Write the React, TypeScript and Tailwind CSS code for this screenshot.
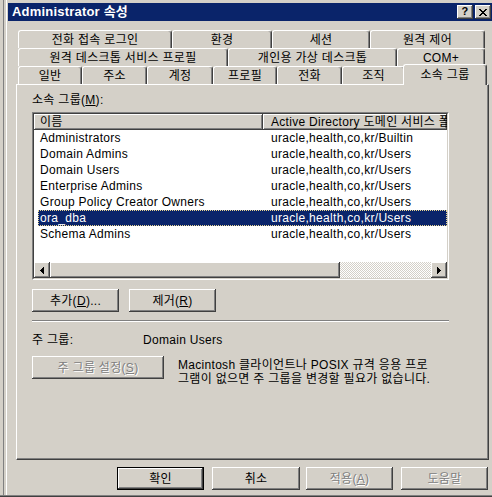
import React from "react";

// classic win2k bevels
const raised =
  "bg-[#d4d0c8] shadow-[inset_-1px_-1px_#404040,inset_1px_1px_#ffffff,inset_-2px_-2px_#808080]";
const disabledText = "text-[#808080] [text-shadow:1px_1px_0_#ffffff]";

const groups: [string, string][] = [
  ["Administrators", "uracle,health,co,kr/Builtin"],
  ["Domain Admins", "uracle,health,co,kr/Users"],
  ["Domain Users", "uracle,health,co,kr/Users"],
  ["Enterprise Admins", "uracle,health,co,kr/Users"],
  ["Group Policy Creator Owners", "uracle,health,co,kr/Users"],
  ["ora_dba", "uracle,health,co,kr/Users"],
  ["Schema Admins", "uracle,health,co,kr/Users"],
];

const Tab = ({ label, className }: { label: string; className: string }) => (
  <div
    className={`flex h-[18px] items-center justify-center whitespace-nowrap rounded-t-[3px] border-l border-t border-r border-l-white border-t-white border-r-[#404040] shadow-[inset_-1px_0_#808080] ${className}`}
  >
    {label}
  </div>
);

const Arrow = ({ dir }: { dir: "left" | "right" }) => (
  <svg width="4" height="7" viewBox="0 0 4 7" shapeRendering="crispEdges">
    {dir === "left" ? <path d="M4 0 L0 3.5 L4 7Z" fill="#000" /> : <path d="M0 0 L4 3.5 L0 7Z" fill="#000" />}
  </svg>
);

const App = () => {
  return (
    <div className="flex h-[497px] w-[492px] flex-col overflow-hidden bg-[#d4d0c8] font-['Liberation_Sans','Noto_Sans_CJK_KR',sans-serif] text-[12px] leading-[14px] tracking-[0.3px] text-black">
      <div className="flex min-h-0 flex-1">
        {/* window frame, left */}
        <div className="flex w-[8px]">
          <div className="w-[3px]" />
          <div className="w-[1px] bg-[#808080]" />
          <div className="w-[2px]" />
          <div className="w-[1px] bg-white" />
          <div className="w-[1px]" />
        </div>

        <div className="flex flex-1 flex-col">
          <div className="h-[3px]" />
          {/* title bar */}
          <div className="flex h-[18px] items-center bg-[#0a246a] pl-[4px] pr-[1px]">
            <span className="text-[13px] font-bold tracking-[0.2px] text-white">Administrator 속성</span>
            <div className="ml-auto flex gap-[2px]">
              <div className={`flex h-[14px] w-[16px] items-center justify-center pb-[1px] text-[11px] font-bold leading-none ${raised}`}>
                ?
              </div>
              <div className={`flex h-[14px] w-[16px] items-center justify-center ${raised}`}>
                <svg width="8" height="7" viewBox="0 0 8 7" shapeRendering="crispEdges">
                  <path d="M0 0h2v1h1v1h2v-1h1v-1h2v1h-1v1h-1v1h-1v1h1v1h1v1h1v1h-2v-1h-1v-1h-2v1h-1v1h-2v-1h1v-1h1v-1h1v-1h-1v-1h-1v-1h-1z" fill="#000" />
                </svg>
              </div>
            </div>
          </div>

          <div className="h-[9px]" />

          {/* tab rows */}
          <div className="flex flex-col pl-[10px]">
            <div className="flex h-[18px]">
              <Tab label="전화 접속 로그인" className="w-[154px]" />
              <Tab label="환경" className="w-[100px]" />
              <Tab label="세션" className="w-[98px]" />
              <Tab label="원격 제어" className="w-[115px]" />
            </div>
            <div className="flex h-[18px]">
              <Tab label="원격 데스크톱 서비스 프로필" className="w-[210px]" />
              <Tab label="개인용 가상 데스크톱" className="w-[169px]" />
              <Tab label="COM+" className="w-[88px]" />
            </div>
            <div className="flex h-[18px] items-start">
              <Tab label="일반" className="w-[64px]" />
              <Tab label="주소" className="w-[65px]" />
              <Tab label="계정" className="w-[66px]" />
              <Tab label="프로필" className="w-[64px]" />
              <Tab label="전화" className="w-[65px]" />
              <Tab label="조직" className="w-[63px]" />
              <div className="relative z-10 -ml-[2px] -mt-[2px] flex h-[21px] w-[84px] items-center justify-center rounded-t-[3px] border-l border-t border-r border-l-white border-t-white border-r-[#404040] bg-[#d4d0c8] pb-[1px] shadow-[inset_-1px_0_#808080]">
                소속 그룹
              </div>
            </div>
          </div>

          {/* tab panel */}
          <div className="ml-[8px] flex h-[376px] w-[473px] flex-col border-l border-t border-r border-b border-l-white border-t-white border-r-[#404040] border-b-[#404040] pl-[15px] pt-[8px] shadow-[inset_-1px_-1px_#808080]">
            <div className="h-[14px]">
              소속 그룹(<u>M</u>):
            </div>

            {/* list view */}
            <div className="mt-[5px] h-[168px] w-[417px] border border-t-[#808080] border-l-[#808080] border-b-white border-r-white">
              <div className="flex h-full flex-col border border-t-[#404040] border-l-[#404040] border-b-[#d4d0c8] border-r-[#d4d0c8] bg-white">
                <div className="flex h-[16px] bg-[#d4d0c8]">
                  <div className={`flex w-[229px] items-center pl-[6px] ${raised}`}>이름</div>
                  <div className={`flex min-w-0 flex-1 items-center overflow-hidden whitespace-nowrap pl-[8px] ${raised}`}>
                    Active Directory 도메인 서비스 폴더
                  </div>
                </div>
                {groups.map(([name, folder], i) => (
                  <div key={name} className="flex h-[16px] pl-[4px]">
                    <div
                      className={
                        i === 5
                          ? "flex flex-1 items-center bg-[#0a246a] text-white outline-1 -outline-offset-1 outline-dotted outline-[#e8d490]"
                          : "flex flex-1 items-center"
                      }
                    >
                      <div className="w-[225px] whitespace-nowrap pl-[2px]">{name}</div>
                      <div className="whitespace-nowrap pl-[8px]">{folder}</div>
                    </div>
                  </div>
                ))}
                <div className="flex-1" />
                {/* horizontal scrollbar */}
                <div className="flex h-[16px] bg-[#d4d0c8]">
                  <div className={`flex w-[16px] items-center justify-center pr-[1px] ${raised}`}>
                    <Arrow dir="left" />
                  </div>
                  <div className={`w-[290px] ${raised}`} />
                  <div className="flex-1 bg-[repeating-conic-gradient(#ffffff_0_25%,#d4d0c8_0_50%)] bg-[length:2px_2px]" />
                  <div className={`flex w-[16px] items-center justify-center pr-[1px] ${raised}`}>
                    <Arrow dir="right" />
                  </div>
                </div>
              </div>
            </div>

            <div className="mt-[9px] flex gap-[10px]">
              <div className={`flex h-[23px] w-[87px] items-center justify-center ${raised}`}>
                추가(<u>D</u>)...
              </div>
              <div className={`flex h-[23px] w-[87px] items-center justify-center ${raised}`}>
                제거(<u>R</u>)
              </div>
            </div>

            <div className="mt-[8px] w-[417px]">
              <div className="h-[1px] bg-[#808080]" />
              <div className="h-[1px] bg-white" />
            </div>

            <div className="mt-[11px] flex h-[14px]">
              <div className="w-[111px]">주 그룹:</div>
              <div>Domain Users</div>
            </div>

            <div className="mt-[9px] flex">
              <div className={`flex h-[23px] w-[132px] items-center justify-center ${raised} ${disabledText}`}>
                주 그룹 설정(<u>S</u>)
              </div>
              <div className="ml-[14px] mt-[2px] whitespace-nowrap">
                Macintosh 클라이언트나 POSIX 규격 응용 프로
                <br />
                그램이 없으면 주 그룹을 변경할 필요가 없습니다.
              </div>
            </div>
          </div>

          {/* dialog buttons */}
          <div className="mt-[7px] flex justify-end pr-[4px]">
            <div className="flex h-[23px] w-[87px] items-center justify-center border border-black bg-[#d4d0c8] shadow-[inset_-1px_-1px_#404040,inset_1px_1px_#ffffff,inset_-2px_-2px_#808080]">
              확인
            </div>
            <div className={`ml-[8px] flex h-[23px] w-[88px] items-center justify-center ${raised}`}>취소</div>
            <div className={`ml-[6px] flex h-[23px] w-[87px] items-center justify-center ${raised} ${disabledText}`}>
              적용(<u>A</u>)
            </div>
            <div className={`ml-[8px] flex h-[23px] w-[87px] items-center justify-center ${raised} ${disabledText}`}>
              도움말
            </div>
          </div>
        </div>
      </div>
      <div className="h-[1px] bg-[#808080]" />
      <div className="h-[1px] bg-[#404040]" />
    </div>
  );
};

export default App;
